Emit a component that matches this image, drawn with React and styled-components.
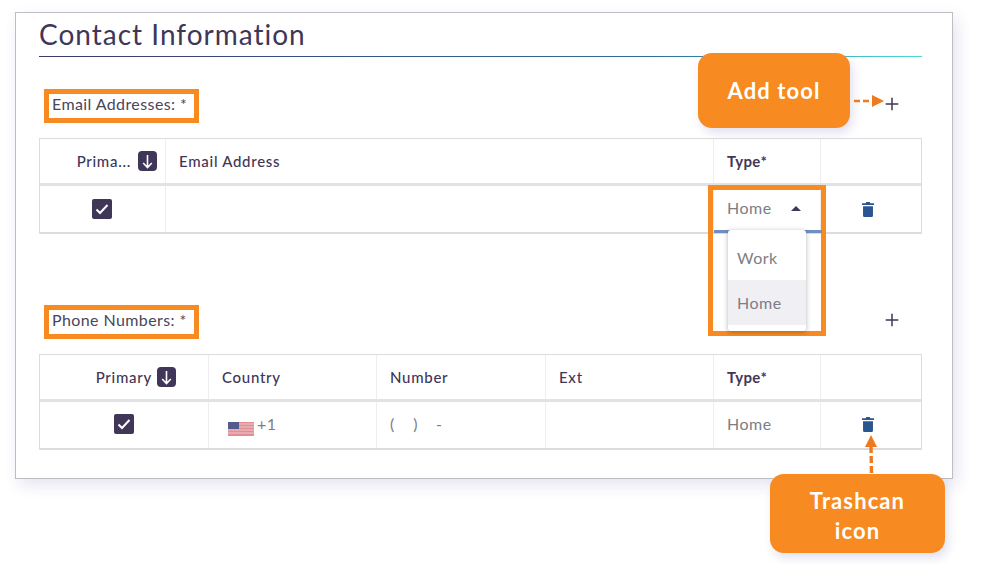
import React from "react";
import styled, { createGlobalStyle } from "styled-components";
import { Plus } from "lucide-react";

const orange = "#f78a20";
const navy = "#3f3658";

const GlobalStyle = createGlobalStyle`
  html, body {
    margin: 0;
    background: #fff;
    font-family: "Lato", "Open Sans", sans-serif;
    color: ${navy};
  }
`;

const Page = styled.div`
  position: relative;
  width: 993px;
  height: 564px;
  overflow: hidden;
  padding: 12px 0 0 15px;
  box-sizing: border-box;
`;

const Card = styled.div`
  width: 938px;
  height: 467px;
  box-sizing: border-box;
  padding: 0 30px 0 23px;
  background: #fff;
  border: 1px solid #bdbdc3;
  box-shadow: 4px 6px 14px rgba(90, 90, 170, 0.16);
`;

const Title = styled.h1`
  margin: 0;
  height: 43px;
  line-height: 43px;
  font-size: 28px;
  font-weight: 400;
  letter-spacing: 1px;
  color: ${navy};
  border-bottom: 1px solid transparent;
  border-image: linear-gradient(90deg, #3d3a6b, #2f6f9a 70%, #4dd9d9) 1;
`;

const Section = styled.section`
  margin-top: ${(p) => p.$top}px;
`;

const SectionHead = styled.div`
  display: flex;
  align-items: center;
  justify-content: space-between;
  height: 34px;
  padding-left: 5px;
  margin-bottom: 15px;
`;

const LabelBox = styled.div`
  width: 155px;
  height: 34px;
  box-sizing: border-box;
  border: 5px solid ${orange};
  padding-left: 3px;
  line-height: 20px;
  font-size: 16px;
  letter-spacing: 0.4px;
  color: #49465a;
  white-space: nowrap;
`;

const AddButton = styled.div`
  display: flex;
  margin-right: 20px;
  margin-top: ${(p) => p.$shift}px;
  color: ${navy};
`;

const Table = styled.div`
  position: relative;
  border: 1px solid #dcdce0;
  border-bottom-width: 2px;
`;

const Row = styled.div`
  display: grid;
  grid-template-columns: ${(p) => p.$cols};
  height: ${(p) => p.$height}px;
  box-sizing: border-box;
  border-bottom: ${(p) => (p.$head ? "3px solid #e2e2e5" : "none")};
`;

const Cell = styled.div`
  position: relative;
  display: flex;
  align-items: center;
  justify-content: ${(p) => p.$justify || "flex-start"};
  gap: ${(p) => p.$gap || 0}px;
  box-sizing: border-box;
  padding: ${(p) => p.$pad || "0 13px"};
  border-right: ${(p) => (p.$last ? "none" : "1px solid #eeeef1")};
  font-size: 14px;
  min-width: 0;
`;

const HeadText = styled.span`
  font-size: 15px;
  font-weight: ${(p) => (p.$bold ? 700 : 500)};
  letter-spacing: ${(p) => (p.$bold ? "0.4px" : "0.72px")};
  color: ${navy};
  white-space: nowrap;
`;

const Value = styled.span`
  font-size: 16px;
  font-weight: 400;
  letter-spacing: 0.5px;
  color: #7d7d84;
  white-space: nowrap;
  margin-top: -3px;
`;

const SortBadge = styled.span`
  display: flex;
  align-items: center;
  justify-content: center;
  width: 19px;
  height: 20px;
  border-radius: 4px;
  background: ${navy};
`;

const CheckBox = styled.span`
  display: flex;
  align-items: center;
  justify-content: center;
  width: 20px;
  height: 20px;
  border-radius: 2px;
  background: ${navy};
  margin-top: ${(p) => p.$shift || 0}px;
  margin-right: 1px;
`;

const TrashIcon = styled.svg`
  width: 12px;
  height: 15px;
  fill: #2b5591;
  margin-top: ${(p) => p.$shift || 0}px;
  margin-right: 6px;
`;

const Caret = styled.span`
  width: 0;
  height: 0;
  margin-left: 19px;
  margin-top: -1px;
  border-left: 5px solid transparent;
  border-right: 5px solid transparent;
  border-bottom: 5px solid ${navy};
`;

const FlagBox = styled.svg`
  width: 26px;
  height: 14px;
  margin-top: 7px;
`;

const SelectHighlight = styled.div`
  position: absolute;
  left: -6px;
  top: -1px;
  width: 118px;
  height: 151px;
  box-sizing: border-box;
  border: 5px solid ${orange};
  pointer-events: none;
`;

const Underline = styled.div`
  position: absolute;
  left: 1px;
  top: 40px;
  width: 108px;
  height: 3px;
  background: #6f8fc0;
`;

const Menu = styled.div`
  position: absolute;
  left: 15px;
  top: 40px;
  width: 78px;
  height: 101px;
  background: #fff;
  border-radius: 3px;
  box-shadow: 0 1px 5px rgba(0, 0, 0, 0.3);
  padding-top: 5px;
  box-sizing: border-box;
`;

const MenuItem = styled.div`
  height: 45px;
  line-height: 45px;
  padding-left: 9px;
  font-size: 16px;
  font-weight: 400;
  letter-spacing: 0.5px;
  color: #7d7d84;
  background: ${(p) => (p.$active ? "#efeff4" : "#fff")};
`;

const Callout = styled.div`
  position: absolute;
  left: ${(p) => p.$left}px;
  top: ${(p) => p.$top}px;
  width: ${(p) => p.$width}px;
  height: ${(p) => p.$height}px;
  padding-top: ${(p) => p.$nudge || 0}px;
  box-sizing: border-box;
  display: flex;
  align-items: center;
  justify-content: center;
  text-align: center;
  background: ${orange};
  border-radius: 14px;
  box-shadow: 3px 5px 10px rgba(90, 90, 170, 0.18);
  color: #fff;
  font-size: 22px;
  line-height: 30px;
  font-weight: 700;
  letter-spacing: 1.1px;
`;

const Arrow = styled.svg`
  position: absolute;
  left: ${(p) => p.$left}px;
  top: ${(p) => p.$top}px;
  overflow: visible;
`;

const Check = () => (
  <svg width="14" height="12" viewBox="0 0 14 12">
    <path d="M1.5 6.5 5 10 12.5 2" fill="none" stroke="#fff" strokeWidth="2" />
  </svg>
);

const SortArrow = () => (
  <svg width="11" height="15" viewBox="0 0 11 15">
    <path d="M5.5 1v12.5M1.2 9 5.5 13.5 9.8 9" fill="none" stroke="#fff" strokeWidth="1.6" />
  </svg>
);

const Trash = ({ shift }) => (
  <TrashIcon viewBox="0 0 14 16" $shift={shift} preserveAspectRatio="none">
    <path d="M5 0h4l.7 1.4H14v1.8H0V1.4h4.3zM1.2 4.4h11.6V14.4a1.6 1.6 0 0 1-1.6 1.6H2.8a1.6 1.6 0 0 1-1.6-1.6z" />
  </TrashIcon>
);

const Flag = () => (
  <FlagBox viewBox="0 0 26 14">
    <rect width="26" height="14" fill="#e08f95" />
    <path d="M0 2h26M0 5h26M0 8h26M0 11h26" stroke="#efc7ca" strokeWidth="1" />
    <rect width="11" height="7" fill="#545a8c" />
  </FlagBox>
);

const emailCols = "126px 548px 107px 1fr";
const phoneCols = "169px 168px 169px 168px 107px 1fr";

export default function App() {
  return (
    <Page>
      <GlobalStyle />
      <Card>
        <Title>Contact Information</Title>
        <Section $top={32}>
          <SectionHead>
            <LabelBox>Email Addresses: *</LabelBox>
            <AddButton $shift={-5}>
              <Plus size={20} strokeWidth={1.8} />
            </AddButton>
          </SectionHead>
          <Table>
            <Row $cols={emailCols} $height={47} $head>
              <Cell $justify="flex-end" $gap={7} $pad="0 8px 0 0">
                <HeadText>Prima...</HeadText>
                <SortBadge>
                  <SortArrow />
                </SortBadge>
              </Cell>
              <Cell>
                <HeadText>Email Address</HeadText>
              </Cell>
              <Cell>
                <HeadText $bold>Type*</HeadText>
              </Cell>
              <Cell $last />
            </Row>
            <Row $cols={emailCols} $height={46}>
              <Cell $justify="center">
                <CheckBox>
                  <Check />
                </CheckBox>
              </Cell>
              <Cell />
              <Cell>
                <Value>Home</Value>
                <Caret />
                <SelectHighlight>
                  <Underline />
                  <Menu>
                    <MenuItem>Work</MenuItem>
                    <MenuItem $active>Home</MenuItem>
                  </Menu>
                </SelectHighlight>
              </Cell>
              <Cell $last $justify="center">
                <Trash />
              </Cell>
            </Row>
          </Table>
        </Section>
        <Section $top={71}>
          <SectionHead>
            <LabelBox>Phone Numbers: *</LabelBox>
            <AddButton $shift={-5}>
              <Plus size={20} strokeWidth={1.8} />
            </AddButton>
          </SectionHead>
          <Table>
            <Row $cols={phoneCols} $height={47} $head>
              <Cell $justify="flex-end" $gap={5} $pad="0 32px 0 0">
                <HeadText>Primary</HeadText>
                <SortBadge>
                  <SortArrow />
                </SortBadge>
              </Cell>
              <Cell>
                <HeadText>Country</HeadText>
              </Cell>
              <Cell>
                <HeadText>Number</HeadText>
              </Cell>
              <Cell>
                <HeadText>Ext</HeadText>
              </Cell>
              <Cell>
                <HeadText $bold>Type*</HeadText>
              </Cell>
              <Cell $last />
            </Row>
            <Row $cols={phoneCols} $height={46}>
              <Cell $justify="center">
                <CheckBox $shift={-2}>
                  <Check />
                </CheckBox>
              </Cell>
              <Cell $gap={3} $pad="0 0 0 19px">
                <Flag />
                <Value>+1</Value>
              </Cell>
              <Cell $gap={18}>
                <Value>(&nbsp;&nbsp;&nbsp;&nbsp;)</Value>
                <Value>-</Value>
              </Cell>
              <Cell />
              <Cell>
                <Value>Home</Value>
              </Cell>
              <Cell $last $justify="center">
                <Trash shift={-1} />
              </Cell>
            </Row>
          </Table>
        </Section>
      </Card>

      <Callout $left={698} $top={53} $width={152} $height={75}>
        Add tool
      </Callout>
      <Arrow $left={853} $top={94} width="32" height="14" viewBox="0 0 32 14">
        <path d="M1 7h17" stroke="#ee7a1f" strokeWidth="2.6" strokeDasharray="6 3" fill="none" />
        <path d="M19 1 31 7 19 13z" fill="#ee7a1f" />
      </Arrow>

      <Callout $left={770} $top={474} $width={175} $height={79} $nudge={5}>
        Trashcan
        <br />
        icon
      </Callout>
      <Arrow $left={864} $top={434} width="14" height="40" viewBox="0 0 14 40">
        <path d="M7 12 7.5 40" stroke="#ee7a1f" strokeWidth="3.4" strokeDasharray="7 3" fill="none" />
        <path d="M7 1 13 13H1z" fill="#ee7a1f" />
      </Arrow>
    </Page>
  );
}
